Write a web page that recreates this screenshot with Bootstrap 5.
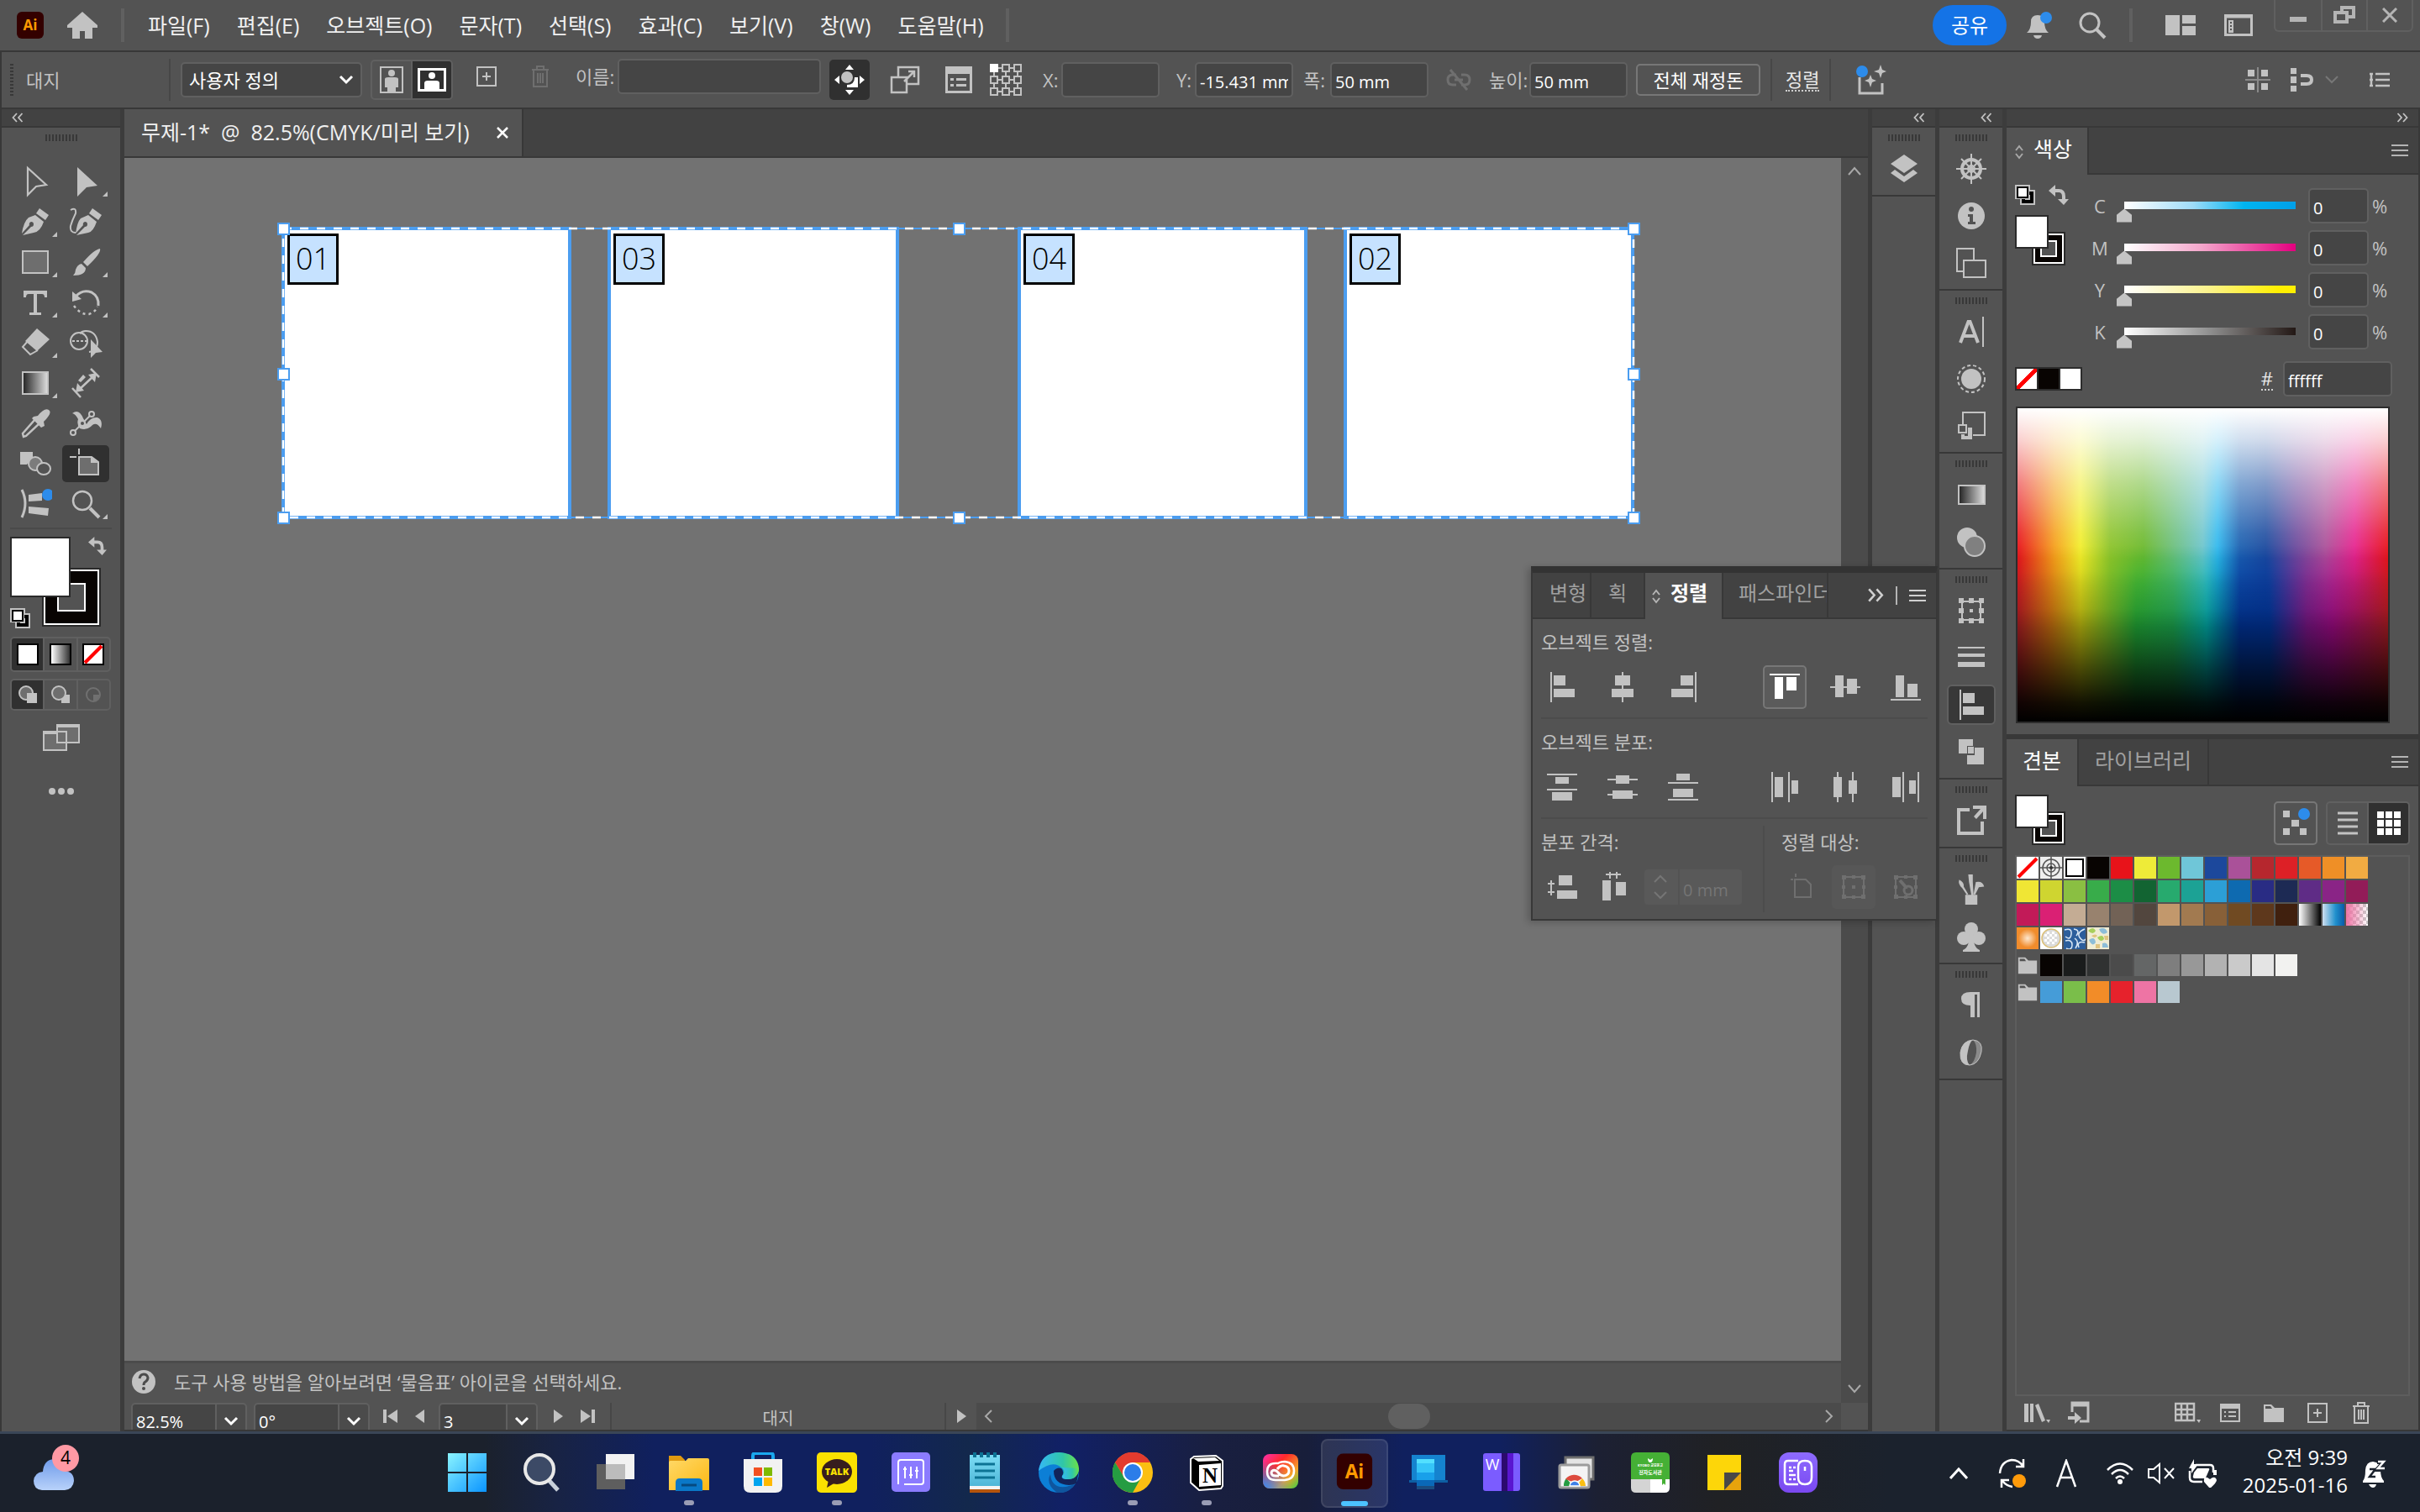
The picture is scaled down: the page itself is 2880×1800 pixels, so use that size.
<!DOCTYPE html>
<html lang="ko">
<head>
<meta charset="utf-8">
<meta name="viewport" content="width=device-width, initial-scale=1">
<title>무제-1* - Illustrator</title>
<link href="https://cdn.jsdelivr.net/npm/bootstrap@5.3.0/dist/css/bootstrap.min.css" rel="stylesheet">
<style>
:root{--pane:#535353;--deep:#424242;--edge:#383838;--field:#454545;--line:#606060;--ink:#f0f0f0;--dim:#c2c2c2}
body{font-family:"Open Sans","Noto Sans CJK KR",sans-serif;font-size:22px;line-height:30px;color:var(--ink);background:var(--edge);overflow:hidden}
svg{display:block;flex:none}
button{font:inherit;color:inherit;background:none;border:0;padding:0}
a{color:inherit;text-decoration:none}
.ic{width:36px;height:36px;color:var(--dim)}
.ic40{width:40px;height:40px;color:var(--dim)}
.ib{display:flex;align-items:center;justify-content:center;flex:none}
.w48{width:48px}.w64{width:64px}
.g10{margin-left:10px}.g12{margin-left:12px}.g20{margin-left:20px}
/* menu bar */
.menubar{height:62px;background:var(--pane);border-bottom:2px solid var(--edge);font-size:25px;line-height:28px}
.menubar .mitem{padding:0 16px;white-space:nowrap}
.vline{width:4px;height:40px;background:#606060;flex:none}
.vthin{width:2px;height:50px;background:#474747;flex:none}
.share{width:88px;height:48px;border-radius:24px;background:#1473e6;color:#fff;font-size:24px;margin-right:6px}
.wctl{align-self:flex-start;height:38px;border:2px solid #606060;border-top:0;border-radius:0 0 6px 6px}
.wctl button{width:54px;border-left:2px solid #606060}
.wctl button:first-child{border-left:0}
/* control bar */
.ctlbar{height:68px;background:var(--pane);border-bottom:2px solid var(--edge);border-left:2px solid var(--edge);color:var(--dim);white-space:nowrap}
.dotsv{width:4px;height:38px;background:repeating-linear-gradient(#383838 0 2px,transparent 2px 4px)}
.fld{background:var(--field);border:2px solid var(--line);border-radius:5px;color:#fff;font-size:20px;padding:4px 4px 0;height:42px;outline:0;min-width:0}
.fld.wide{width:242px}.fld.num{width:117px}
.sel{appearance:none;background:var(--field) url("data:image/svg+xml,%3Csvg xmlns='http://www.w3.org/2000/svg' viewBox='0 0 18 12'%3E%3Cpath d='M2 2l7 7 7-7' fill='none' stroke='%23fff' stroke-width='3'/%3E%3C/svg%3E") no-repeat right 8px center/18px 12px;border:2px solid var(--line);border-radius:5px;color:#fff;height:42px;outline:0}
.seg{height:48px;border:2px solid var(--line);border-radius:5px;overflow:hidden}
.seg>button{flex:1;align-self:stretch;border-left:2px solid var(--line)}
.seg>button:first-child{border-left:0}
.seg .on{background:#303030}
.onbtn{background:#303030;border-radius:5px;height:48px}
.obtn{border:2px solid #777;border-radius:5px;height:38px;width:148px;color:#fff}
.dotted{border-bottom:2px dotted #d0d0d0;color:#e8e8e8;line-height:26px}
.tl{width:170px;margin-left:15px}
/* workspace */
.colhead{height:22px;background:var(--deep);border-bottom:2px solid var(--edge);flex:none}
.toolbox{width:148px;background:var(--pane);border-left:2px solid var(--edge);border-right:5px solid #3c3c3c}
.grip{width:38px;height:8px;background:repeating-linear-gradient(90deg,#383838 0 2px,transparent 2px 4px)}
.tools{display:grid;grid-template-columns:60px 60px;grid-auto-rows:48px;padding:8px 10px 0;margin-top:16px}
.tools button{position:relative;margin:2px;border-radius:5px}
.tools .on{background:#303030}
.more::after{content:"";position:absolute;right:2px;bottom:4px;border:solid transparent;border-width:0 0 6px 6px;border-bottom-color:var(--dim)}
.hr1{height:2px;background:#4a4a4a;margin:4px 10px 9px}
.duo{position:relative;flex:none}
.duo i{position:absolute;display:block}
.duo .fg{left:0;top:0;background:#fff;border:2px solid #2a2a2a;z-index:1}
.duo .bk{right:0;bottom:0;border:2px solid #2a2a2a;background:#fff}
.duo .bk::before{content:"";position:absolute;inset:2px;background:#080402}
.duo .bk::after{content:"";position:absolute;background:var(--pane);border:2px solid #fff}
.fillbox{margin-left:10px}
.duo.big{width:108px;height:109px}.duo.big .fg{width:72px;height:72px}.duo.big .bk{width:70px;height:70px;bottom:2px}.duo.big .bk::after{inset:16px}
.duo.sm{width:60px;height:60px}.duo.sm .fg,.duo.sm .bk{width:40px;height:40px}.duo.sm .bk::after{inset:8px}
.docbar{height:58px;background:var(--deep);border-bottom:2px solid var(--edge)}
.doctab{background:var(--pane);padding:0 12px 0 20px;font-size:25px;border-right:2px solid var(--edge);height:56px;white-space:pre}
.doctab span{padding-bottom:2px}
.board{background:#727272;position:relative;overflow:hidden}
.ab{position:absolute;top:82px;height:348px;background:#fff;border:4px solid #4b9df0}
.ab span{position:absolute;left:3px;top:4px;width:61px;height:61px;border:3px solid #000;background:#c6e2ff;color:#000;font-size:36px;font-weight:300;line-height:54px;text-align:center}
.marq{position:absolute;left:181px;top:75px}
.hint{height:50px;background:var(--pane);border-top:3px solid #4b4b4b;color:var(--dim);padding:0 0 4px 9px;gap:22px}
.vsb{width:32px;background:#4b4b4b}
.strow{height:32px;background:var(--pane);overflow:hidden;color:var(--dim);font-size:20px}
.strow .sel{padding:4px 4px 0;background-image:url("data:image/svg+xml,%3Csvg xmlns='http://www.w3.org/2000/svg' viewBox='0 0 18 12'%3E%3Cpath d='M2 2l7 7 7-7' fill='none' stroke='%23fff' stroke-width='3'/%3E%3C/svg%3E"),linear-gradient(90deg,#606060 0 2px,#4b4b4b 2px);background-position:right 8px top 14px,right 0 top 0;background-size:18px 12px,36px 42px}
.strow .sel.w138{width:138px}.strow .sel.w118{width:118px}
.stnav{gap:20px;width:66px}
.hsb{background:#4b4b4b}
.knob{width:50px;height:30px;border-radius:15px;background:#606060}
.corner{width:32px}
.dock{width:75px;background:var(--pane);flex:none}
.dsec{border-bottom:2px solid var(--edge);padding:8px 0 3px;display:flex;flex-direction:column;align-items:center}
.dsec .grip{margin:0 auto 5px}
.dsec button{width:58px;height:48px;margin:4px 0;border-radius:6px;border:2px solid transparent}
.dsec button.on{background:#383838;border-color:#606060}
.gap5{width:5px;background:#3c3c3c;flex:none}
.side{width:490px;flex:none;margin-right:2px}
.tabsrow{height:56px;background:var(--deep);border-bottom:2px solid var(--edge);font-size:25px}
.ptab{height:54px;border-right:2px solid var(--edge);color:#a0a0a0;padding-bottom:5px;white-space:nowrap}
.ptab.on{background:var(--pane);height:56px;color:#fff;padding-bottom:7px}
.pane{background:var(--pane)}
/* colour panel */
.chan{height:50px;color:var(--dim)}
.chan label{width:30px;text-align:center}
.chan input[type=range]{appearance:none;width:222px;height:26px;margin:14px 0 0 5px;background:var(--g) no-repeat 9px 1px/calc(100% - 18px) 9px}
.chan input[type=range]::-webkit-slider-thumb{appearance:none;width:18px;height:16px;margin-top:9px;background:#c4c4c4;clip-path:polygon(50% 0,100% 45%,100% 100%,0 100%,0 45%)}
.fld.pc{width:72px;margin-left:6px}
.gc{--g:linear-gradient(90deg,#fff,#9fdcf8 40%,#00b4f0 70%,#00a0e9)}
.gm{--g:linear-gradient(90deg,#fff,#f4a6cb 45%,#e4007f)}
.gy{--g:linear-gradient(90deg,#fff,#fbf28a 50%,#ffef00 90%)}
.gk{--g:linear-gradient(90deg,#fff,#8f8f8f 50%,#231815)}
.spec{height:377px;margin:12px 34px 0 11px;border:2px solid #2c2c2c;position:relative;background:linear-gradient(90deg,#e8131a,#f5a01c 10%,#f2ee2c 17%,#8cc32a 25%,#6cb92e 34%,#6ec5cc 50%,#30b8ee 54%,#1c60b0 60%,#1c4a9e 67%,#6a4a9c 75%,#aa5199 83%,#e6258f 91%,#e8131a)}
.spec::before,.spec::after{content:"";position:absolute;inset:0}
.spec::before{background:linear-gradient(90deg,#b01e24,#c87010 9%,#c4c010 17%,#22ac38 32%,#1caa50 42%,#00ada9 51%,#00349a 60%,#00349a 68%,#7a1688 78%,#a00a86 85%,#b01e24);-webkit-mask:linear-gradient(transparent 44%,rgba(0,0,0,.6) 56%,#000 70%)}
.spec::after{background:linear-gradient(#fff,rgba(255,255,255,.8) 10%,rgba(255,255,255,.45) 24%,rgba(255,255,255,.12) 40%,rgba(255,255,255,0) 48%,rgba(0,0,0,0) 52%,rgba(0,0,0,.12) 64%,rgba(0,0,0,.35) 73%,rgba(0,0,0,.62) 83%,rgba(0,0,0,.9) 94%,#000)}
.tri{border:2px solid #2c2c2c;width:80px;height:28px;gap:2px;background:#2c2c2c}
.tri i{flex:1}
.nonew{background:linear-gradient(to bottom right,#fff 43%,#f00 43% 57%,#fff 57%)}
.fld.hex{width:130px}
/* swatches */
.swlist{border:2px solid #5d5d5d;position:relative;margin:12px 10px 0}
.swrow{gap:2px;height:26px;margin-bottom:2px;color:var(--dim)}
.swrow.grp{margin:6px 0}
.swrow button{width:26px;height:26px;flex:none;display:block}
.sqb{width:52px;height:52px;border:2px solid #777;border-radius:5px}
.s52{width:100px;height:52px}
.botic{height:40px;padding:0 14px 0 20px;color:var(--dim)}
/* align panel */
.alpan{position:absolute;right:574px;top:544px;width:484px;border:2px solid var(--edge);border-top:8px solid #333;background:var(--pane);box-shadow:-4px 2px 8px rgba(0,0,0,.2)}
.alpan .tabsrow{height:55px;font-size:24px}
.alpan .ptab{height:53px}.alpan .ptab.on{height:55px;font-weight:700}
.alpan .lab{color:var(--dim);margin:12px 10px 0;height:30px}
.airow{padding:0 10px 0 9px;height:52px;margin-top:13px}
.airow button{width:52px;height:52px;margin-right:20px;border:2px solid transparent;border-radius:5px}
.airow button:last-child{margin-right:0}
.airow .tight{margin-right:10px}
.airow .hot{border-color:#777;background:#5b5b5b}
.airow .hot svg{color:#fff}
.airow .off{background:#575757}
.airow .off svg,.dimm{color:#6f6f6f}
.hr2{height:2px;background:#4c4c4c;margin:10px 10px 0}
.spin{width:116px;height:42px;background:#595959;border-radius:4px;color:#757575}
.spin input{width:76px;background:none;border:0;border-left:2px solid #535353;height:42px;padding:6px 0 0 4px;color:#757575;font-size:20px}
/* taskbar */
.tb{height:96px;border-top:3px solid #3a4657;background:linear-gradient(90deg,#1b212c 0 20%,#182344 23%,#10205e 27% 36%,#13284c 40%,#112066 44%,#191f40 50%,#181e3a 54%,#10205e 58% 62%,#1c2033 66%,#202124 71%,#1b222d 78%);color:#fff}
.wth{width:512px;padding-left:38px}
.app{width:88px;height:93px;padding-bottom:2px;position:relative}
.app.act{background:rgba(255,255,255,.1);border:2px solid rgba(255,255,255,.09);border-radius:8px;width:80px;height:82px;margin:0 4px}
.app.run::after{content:"";position:absolute;bottom:8px;width:12px;height:6px;border-radius:3px;background:#9a9db5}
.app.act::after{bottom:0;width:32px;background:#4cc2ff}
.app svg{width:48px;height:48px}
.clock{font-size:24px;line-height:33px;text-align:right;white-space:nowrap;padding-bottom:5px}
.cnt{position:absolute;left:24px;top:-12px;width:32px;height:32px;border-radius:50%;background:#ff99a4;color:#000;font-size:21px;line-height:31px;text-align:center}
</style>
</head>
<body class="vh-100 d-flex flex-column">
<svg width="0" height="0" class="position-absolute" aria-hidden="true">
<defs>
<linearGradient id="gbw"><stop stop-color="#222"/><stop offset="1" stop-color="#e0e0e0"/></linearGradient>
<linearGradient id="gwb"><stop stop-color="#fff"/><stop offset="1" stop-color="#333"/></linearGradient>
<linearGradient id="gwin" x2="1" y2="1"><stop stop-color="#8af4ff"/><stop offset="1" stop-color="#0a94ff"/></linearGradient>
<linearGradient id="gfold" x2="1" y2="1"><stop stop-color="#ffd968"/><stop offset="1" stop-color="#fdb813"/></linearGradient>
<linearGradient id="gedge" x2="1"><stop stop-color="#35b8f5"/><stop offset=".6" stop-color="#30c6a8"/><stop offset="1" stop-color="#6ae04a"/></linearGradient>
<linearGradient id="gnote" x2="0" y2="1"><stop stop-color="#7cdcf4"/><stop offset="1" stop-color="#4fb7d8"/></linearGradient>
<linearGradient id="gcc" x2="1" y2="1"><stop stop-color="#ff2fb0"/><stop offset=".35" stop-color="#ff2a2a"/><stop offset=".7" stop-color="#f5a42a"/><stop offset="1" stop-color="#38d048"/></linearGradient>
<radialGradient id="gcc2" cx="0" cy="1" r=".8"><stop stop-color="#2c8cff"/><stop offset="1" stop-color="#2c8cff" stop-opacity="0"/></radialGradient>
<linearGradient id="gpur" x2="0" y2="1"><stop stop-color="#8d6bff"/><stop offset="1" stop-color="#7a48f0"/></linearGradient>
<linearGradient id="gcld" x2="0" y2="1"><stop stop-color="#6f9bea"/><stop offset="1" stop-color="#b8d2fa"/></linearGradient>
</defs>
<symbol id="dchl" viewBox="0 0 14 12"><path d="M6 1L1.500 6 6 11M12.500 1L8 6l4.500 5" fill="none" stroke="currentColor" stroke-width="1.800"/></symbol>
<symbol id="dchr" viewBox="0 0 14 12"><path d="M1.500 1L6 6l-4.500 5M8 1l4.500 5L8 11" fill="none" stroke="currentColor" stroke-width="1.800"/></symbol>
<symbol id="ham" viewBox="0 0 20 14"><path d="M0 1h20M0 7h20M0 13h20" stroke="currentColor" stroke-width="2"/></symbol>
<symbol id="updn" viewBox="0 0 10 18"><path d="M1 7l4-5 4 5M1 11l4 5 4-5" fill="none" stroke="currentColor" stroke-width="2"/></symbol>
<symbol id="swap" viewBox="0 0 24 24"><path d="M7 7h5q6 0 6 7v4" fill="none" stroke="currentColor" stroke-width="4"/><path d="M0 7l8-7v14zM11 17h13l-6 7z" fill="currentColor"/></symbol>
<symbol id="dflt" viewBox="0 0 24 24"><path d="M0 0h18v6h6v18H6v-7H0z" fill="#c2c2c2"/><path d="M2 2h14v14H2z" fill="#000"/><path d="M4 4h10v10H4z" fill="#fff"/><path d="M17 8h5v14H8v-5h4v1h6v-6h-1z" fill="#000"/></symbol>
<symbol id="a-l" viewBox="0 0 36 36"><path d="M4 0h2v36H4zM8 4h14v12H8zM8 20h25v10H8z" fill="currentColor"/></symbol>
<symbol id="a-c" viewBox="0 0 36 36"><path d="M17 0h2v36h-2zM9 4h18v12H9zM5 20h26v10H5z" fill="currentColor"/></symbol>
<symbol id="a-r" viewBox="0 0 36 36"><path d="M32 0h2v36h-2zM15 4h15v12H15zM4 20h26v10H4z" fill="currentColor"/></symbol>
<symbol id="a-t" viewBox="0 0 36 36"><path d="M0 2h36v2H0zM6 6h10v26H6zM20 6h12v16H20z" fill="currentColor"/></symbol>
<symbol id="a-m" viewBox="0 0 36 36"><path d="M0 17h36v2H0zM6 4h10v26H6zM20 8h12v18H20z" fill="currentColor"/></symbol>
<symbol id="a-b" viewBox="0 0 36 36"><path d="M0 32h36v2H0zM6 4h10v26H6zM20 14h12v16H20z" fill="currentColor"/></symbol>
<symbol id="d-t" viewBox="0 0 36 36"><path d="M0 2h36v2H0zM10 6h16v8H10zM0 20h36v2H0zM6 24h24v10H6z" fill="currentColor"/></symbol>
<symbol id="d-m" viewBox="0 0 36 36"><path d="M0 8h36v2H0zM10 4h16v10H10zM0 26h36v2H0zM6 22h24v10H6z" fill="currentColor"/></symbol>
<symbol id="d-b" viewBox="0 0 36 36"><path d="M10 2h16v8H10zM0 12h36v2H0zM6 20h24v10H6zM0 32h36v2H0z" fill="currentColor"/></symbol>
<symbol id="d-l" viewBox="0 0 36 36"><path d="M2 0h2v36H2zM6 6h10v24H6zM22 0h2v36h-2zM26 10h8v16h-8z" fill="currentColor"/></symbol>
<symbol id="d-c" viewBox="0 0 36 36"><path d="M8 0h2v36H8zM4 6h10v24H4zM26 0h2v36h-2zM22 10h10v16H22z" fill="currentColor"/></symbol>
<symbol id="d-r" viewBox="0 0 36 36"><path d="M2 6h10v24H2zM14 0h2v36h-2zM22 10h8v16h-8zM32 0h2v36h-2z" fill="currentColor"/></symbol>
<symbol id="sp-v" viewBox="0 0 36 36"><path d="M14 4h16v12H14zM12 22h24v10H12zM4 10h2v18H4zM1 13h8v2H1zM1 23h8v2H1z" fill="currentColor"/></symbol>
<symbol id="sp-h" viewBox="0 0 36 36"><path d="M4 10h10v24H4zM20 12h12v16H20zM8 2h18v2H8zM12 0h2v8h-2zM20 0h2v8h-2z" fill="currentColor"/></symbol>
<symbol id="bbox" viewBox="0 0 36 36"><path d="M7 7h22v22H7z" fill="none" stroke="currentColor" stroke-width="2"/><path d="M3 3h6v6H3zM15 3h6v6h-6zM27 3h6v6h-6zM3 15h6v6H3zM27 15h6v6h-6zM3 27h6v6H3zM15 27h6v6h-6zM27 27h6v6h-6zM16 16h4v4h-4z" fill="currentColor"/></symbol>
<symbol id="bbox2" viewBox="0 0 36 36"><path d="M6 6h24v24H6z" fill="none" stroke="currentColor" stroke-width="2"/><path d="M4 4h5v5H4zM16 4h4v4h-4zM27 4h5v5h-5zM4 16h4v4H4zM28 16h4v4h-4zM4 27h5v5H4zM16 28h4v4h-4zM27 27h5v5h-5zM16 16h4v4h-4z" fill="currentColor"/></symbol>
<symbol id="s-trash" viewBox="0 0 28 28"><path d="M4 6h20M10 6V2h8v4M6 6v20h16V6M11 10v12M14 10v12M17 10v12" fill="none" stroke="currentColor" stroke-width="2"/></symbol>
<symbol id="s-plus" viewBox="0 0 28 28"><path d="M3 3h22v22H3zM14 9v10M9 14h10" fill="none" stroke="currentColor" stroke-width="2"/></symbol>
<symbol id="s-fold" viewBox="0 0 28 28"><path d="M2 4h9l4 4h11v17H2z" fill="currentColor"/><path d="M4 9V6h6l2 3z" fill="#535353"/></symbol>
<symbol id="ailogo" viewBox="0 0 32 32"><rect width="32" height="32" rx="6" fill="#330000"/><text x="16" y="22" text-anchor="middle" font-family="Open Sans" font-weight="700" font-size="17" fill="#ff9a00">Ai</text></symbol>
</svg>

<header class="menubar d-flex align-items-center flex-shrink-0">
  <svg width="32" height="32" class="g20"><use href="#ailogo"/></svg>
  <a href="#" class="ms-4" aria-label="홈"><svg width="44" height="34" viewBox="0 0 44 34"><path d="M22 1L4 17v3h6v13h9v-9h6v9h9V20h6v-3z" fill="#c2c2c2"/></svg></a>
  <span class="vline ms-4"></span>
  <nav class="d-flex g12">
    <a class="mitem" href="#">파일(F)</a><a class="mitem" href="#">편집(E)</a><a class="mitem" href="#">오브젝트(O)</a><a class="mitem" href="#">문자(T)</a><a class="mitem" href="#">선택(S)</a><a class="mitem" href="#">효과(C)</a><a class="mitem" href="#">보기(V)</a><a class="mitem" href="#">창(W)</a><a class="mitem" href="#">도움말(H)</a>
  </nav>
  <span class="vline g10"></span>
  <div class="ms-auto d-flex align-items-center align-self-stretch">
    <button class="share">공유</button>
    <button class="ib w64" aria-label="알림"><svg width="36" height="36" viewBox="0 0 36 36"><path d="M4 27q5-4 5-13 0-8 8-8t8 8q0 9 5 13z" fill="#c2c2c2"/><path d="M12 30h10q-1 4-5 4t-5-4z" fill="#c2c2c2"/><circle cx="27" cy="9" r="7" fill="#2d8ceb"/></svg></button>
    <button class="ib w64" aria-label="검색"><svg width="36" height="36" viewBox="0 0 36 36"><circle cx="15" cy="15" r="11" fill="none" stroke="#c2c2c2" stroke-width="3"/><path d="M23 23l10 10" stroke="#c2c2c2" stroke-width="4"/></svg></button>
    <span class="vline g12"></span>
    <button class="ib g20" style="width:74px" aria-label="작업 영역"><svg width="36" height="24" viewBox="0 0 36 24"><path d="M0 0h17v24H0zM20 0h16v10H20zM20 13h16v11H20z" fill="#c2c2c2"/></svg></button>
    <button class="ib w64" aria-label="화면"><svg width="34" height="26" viewBox="0 0 34 26"><path d="M1.500 1.500h31v23h-31zM1 3h32" fill="none" stroke="#c2c2c2" stroke-width="3"/><path d="M5 7h6v15H5z" fill="#c2c2c2"/><path d="M7 9h2v2H7zM7 13h2v2H7zM7 17h2v2H7z" fill="#535353"/></svg></button>
    <div class="wctl d-flex g10 me-2">
      <button class="ib" aria-label="최소화"><svg width="20" height="22"><path d="M0 13h20v6H0z" fill="#b4b4b4"/></svg></button>
      <button class="ib" aria-label="복원"><svg width="26" height="22" viewBox="0 0 26 22"><path d="M10 6V2h14v11h-6M2 8h14v11H2z" fill="none" stroke="#b4b4b4" stroke-width="4"/></svg></button>
      <button class="ib" aria-label="닫기"><svg width="18" height="18"><path d="M1 1l16 16M17 1L1 17" stroke="#b4b4b4" stroke-width="3"/></svg></button>
    </div>
  </div>
</header>

<section class="ctlbar d-flex align-items-center flex-shrink-0">
  <span class="dotsv g10"></span>
  <span class="tl">대지</span>
  <span class="vthin"></span>
  <select class="sel g12 ps-2" style="width:216px" aria-label="사전 설정"><option>사용자 정의</option></select>
  <div class="seg d-flex g10" style="width:98px">
    <button class="ib" aria-label="세로"><svg width="28" height="32" viewBox="0 0 28 32"><path d="M1 1h26v30H1z" fill="none" stroke="#c2c2c2" stroke-width="2"/><circle cx="14" cy="8" r="4" fill="#c2c2c2"/><path d="M6 15q0-2 4-2h8q4 0 4 2v10h-3v6H9v-6H6z" fill="#c2c2c2"/></svg></button>
    <button class="ib on" aria-label="가로"><svg width="34" height="28" viewBox="0 0 34 28"><path d="M1.500 1.500h31v25h-31z" fill="none" stroke="#fff" stroke-width="3"/><circle cx="17" cy="9" r="4" fill="#fff"/><path d="M8 26V18q0-3 4-3h10q4 0 4 3v8z" fill="#fff"/></svg></button>
  </div>
  <button class="ib w64 ms-2" aria-label="새 대지"><svg width="28" height="28" class="mb-2"><use href="#s-plus"/></svg></button>
  <button class="ib w64 dimm" aria-label="삭제"><svg width="28" height="28" class="mb-2"><use href="#s-trash"/></svg></button>
  <label class="g10 mb-2" style="width:50px" for="nm">이름:</label><input id="nm" class="fld wide mb-2">
  <button class="ib onbtn w48 g10" aria-label="대지와 함께 이동"><svg width="36" height="36" viewBox="0 0 36 36"><path d="M18 0l5 6H13zM18 36l5-6H13zM0 18l6-5v10zM36 18l-6-5v10z" fill="#fff"/><circle cx="15" cy="15" r="7" fill="#c2c2c2"/><path d="M24 15h4v12H15v-3q9 0 9-9z" fill="#fff"/></svg></button>
  <button class="ib w64 g10" aria-label="크기"><svg class="ic" viewBox="0 0 36 36"><path d="M10 15V3h24v20H20M2 15h18v18H2zM17 20L29 8M22 8h7v7" fill="none" stroke="currentColor" stroke-width="2.500"/></svg></button>
  <button class="ib w64" aria-label="옵션"><svg width="32" height="32" viewBox="0 0 32 32"><path d="M1.500 1.500h29v29h-29z" fill="none" stroke="#c2c2c2" stroke-width="3"/><path d="M1 1h30v8H1zM6 14h4v3H6zM13 14h12v3H13zM6 21h4v3H6zM13 21h12v3H13z" fill="#c2c2c2"/></svg></button>
  <button class="ib w48" aria-label="기준점"><svg width="38" height="38" viewBox="0 0 38 38"><path d="M5 5h28v28H5zM5 19h28M19 5v28" fill="none" stroke="#c2c2c2" stroke-width="2"/><path d="M15 1h8v8h-8zM29 1h8v8h-8zM1 15h8v8H1zM15 15h8v8h-8zM29 15h8v8h-8zM1 29h8v8H1zM15 29h8v8h-8zM29 29h8v8h-8z" fill="#535353" stroke="#c2c2c2" stroke-width="2"/><path d="M0 0h10v10H0z" fill="#fff"/></svg></button>
  <label class="g20" style="width:22px" for="fx">X:</label><input id="fx" class="fld num">
  <label class="g20" style="width:22px" for="fy">Y:</label><input id="fy" class="fld num" value="-15.431 mm">
  <label class="g12" style="width:32px" for="fw">폭:</label><input id="fw" class="fld num" value="50 mm">
  <button class="ib g12 dimm w48" aria-label="비율 유지"><svg width="30" height="30" viewBox="0 0 30 30"><path d="M12 9H8q-6 0-6 6t6 6h4M18 9h4q6 0 6 6t-6 6h-4M10 15h10M5 3l20 24" fill="none" stroke="currentColor" stroke-width="3"/></svg></button>
  <label class="g12" style="width:48px" for="fh">높이:</label><input id="fh" class="fld num" value="50 mm">
  <button class="obtn g10">전체 재정돈</button>
  <span class="vthin g12"></span>
  <a class="dotted ms-3" href="#">정렬</a>
  <span class="vthin g12"></span>
  <button class="ib g20" style="width:56px" aria-label="생성"><svg width="40" height="40" viewBox="0 0 40 40"><path d="M6 17v19h27V24" fill="none" stroke="#c2c2c2" stroke-width="3"/><path d="M31 2l2 6 5 2-5 2-2 6-2-6-6-2 6-2zM19 14l2 5 5 2-5 2-2 6-2-6-5-2 5-2z" fill="#c2c2c2"/><circle cx="9" cy="10" r="7" fill="#2d8ceb"/></svg></button>
  <div class="ms-auto d-flex align-items-center" style="padding-right:36px">
    <svg width="30" height="30" viewBox="0 0 30 30"><path d="M3 3h8v8H3zM19 3h8v8h-8zM3 19h8v8H3zM19 19h8v8h-8z" fill="#c2c2c2"/><path d="M15 0v30M0 15h30" stroke="#8a8a8a" stroke-width="2"/></svg>
    <svg width="28" height="30" viewBox="0 0 28 30" class="ms-4"><path d="M0 1h7v7H0zM0 11h7v8H0zM0 22h7v7H0z" fill="#c2c2c2"/><path d="M12 10h7q6 0 6 5t-6 5h-7" fill="none" stroke="#c2c2c2" stroke-width="4"/></svg>
    <svg width="18" height="12" viewBox="0 0 18 12" class="g12"><path d="M2 2l7 7 7-7" fill="none" stroke="#777" stroke-width="2"/></svg>
    <svg width="24" height="18" viewBox="0 0 24 18" style="margin-left:36px"><path d="M0 2h4M7 2h17M0 9h4M7 9h17M0 16h4M7 16h17M2 1v16" stroke="#c2c2c2" stroke-width="2.500"/></svg>
  </div>
</section>

<main class="d-flex flex-grow-1 position-relative" style="min-height:0">
  <aside class="toolbox d-flex flex-column flex-shrink-0">
    <div class="colhead d-flex align-items-center ps-2"><svg width="14" height="12" class="ms-1" color="#c2c2c2"><use href="#dchl"/></svg></div>
    <div class="grip mx-auto mt-2"></div>
    <div class="tools">
      <button class="ib" aria-label="선택"><svg class="ic40" viewBox="0 0 40 40"><path d="M11 4v32l10-10 12-2z" fill="none" stroke="currentColor" stroke-width="2.200"/></svg></button>
      <button class="ib more" aria-label="직접 선택"><svg class="ic40" viewBox="0 0 40 40"><path d="M10 3v35l11-11 13-2z" fill="currentColor"/></svg></button>
      <button class="ib more" aria-label="펜"><svg class="ic40" viewBox="0 0 40 40"><path d="M25 4l11 8-4 6-11-8zM20 12l10 8q-4 12-12 13L5 36l10-10q3 0 3-3t-3-3q-3 1-2 4L4 34q2-14 8-19z" fill="currentColor"/></svg></button>
      <button class="ib" aria-label="곡률"><svg class="ic40" viewBox="0 0 40 40"><path d="M28 4l11 8-4 6-11-8zM23 12l10 8q-4 12-10 13L9 36l10-10q3 0 3-3t-3-3q-3 1-2 4L8 34q2-14 6-18z" fill="currentColor"/><path d="M2 6q7-4 6 4-4 8-6 15-1 8 6 8" fill="none" stroke="currentColor" stroke-width="2"/></svg></button>
      <button class="ib more" aria-label="사각형"><svg class="ic40" viewBox="0 0 40 40"><path d="M5 7h30v26H5z" fill="#6e6e6e" stroke="currentColor" stroke-width="2"/></svg></button>
      <button class="ib more" aria-label="브러시"><svg class="ic40" viewBox="0 0 40 40"><path d="M37 4q2 5-15 21l-5-5Q30 5 37 4zM15 22l5 5q0 9-15 9 3-3 3-7 2-6 7-7z" fill="currentColor"/></svg></button>
      <button class="ib more" aria-label="문자"><svg class="ic40" viewBox="0 0 40 40"><path d="M6 6h28v8h-3q0-4-3-4h-6v22h5v3H13v-3h5V10h-6q-3 0-3 4H6z" fill="currentColor"/></svg></button>
      <button class="ib more" aria-label="회전"><svg class="ic40" viewBox="0 0 40 40"><path d="M8 13q8-9 19-5 9 5 8 16" fill="none" stroke="currentColor" stroke-width="3"/><path d="M4 7v12l11-3z" fill="currentColor"/><path d="M6 24q8 11 18 10 8-3 10-9" fill="none" stroke="currentColor" stroke-width="2.500" stroke-dasharray="3 4"/></svg></button>
      <button class="ib more" aria-label="지우개"><svg class="ic40" viewBox="0 0 40 40"><path d="M22 3l15 13-15 14L8 18z" fill="currentColor"/><path d="M12 17L5 25l9 9 9-5" fill="none" stroke="currentColor" stroke-width="2"/></svg></button>
      <button class="ib" aria-label="도형 구성"><svg class="ic40" viewBox="0 0 40 40"><path d="M24 31q10-1 10-12Q32 6 20 6q-4 0-7 3" fill="none" stroke="currentColor" stroke-width="2"/><circle cx="12" cy="18" r="10" fill="none" stroke="currentColor" stroke-width="2"/><path d="M4 18h20" stroke="currentColor" stroke-width="2" stroke-dasharray="3 2"/><path d="M26 16v22l6-6 8-1z" fill="currentColor"/></svg></button>
      <button class="ib more" aria-label="그레이디언트"><svg class="ic40" viewBox="0 0 40 40"><path d="M5 7h30v26H5z" fill="url(#gbw)" stroke="currentColor" stroke-width="2"/></svg></button>
      <button class="ib" aria-label="치수"><svg class="ic40" viewBox="0 0 40 40"><path d="M4 26l10 11M26 3l10 10M12 28L29 12" stroke="currentColor" stroke-width="2.500"/><path d="M8 31l2-11 8 9zM33 8l-2 11-8-9zM11 17l6-7 3 3-6 6z" fill="currentColor"/></svg></button>
      <button class="ib" aria-label="스포이드"><svg class="ic40" viewBox="0 0 40 40"><path d="M6 36l-1-4 15-17 5 5L9 35z" fill="none" stroke="currentColor" stroke-width="2.500"/><path d="M18 12l5-1q8-10 13-7t-6 14l1 5-4 2-11-11z" fill="currentColor"/></svg></button>
      <button class="ib" aria-label="퍼펫 뒤틀기"><svg class="ic40" viewBox="0 0 40 40"><path d="M4 8q8-6 13 6l4 7q5-9 13-8 7 3 4 13-5-8-10-4-6 7-15 4Q9 21 11 15 8 9 4 8z" fill="currentColor"/><path d="M5 31L28 8" stroke="currentColor" stroke-width="2"/><circle cx="5" cy="31" r="3" fill="#535353" stroke="currentColor" stroke-width="2"/><circle cx="27" cy="9" r="3" fill="#535353" stroke="currentColor" stroke-width="2"/><circle cx="16" cy="20" r="3" fill="#535353" stroke="currentColor" stroke-width="2"/></svg></button>
      <button class="ib" aria-label="블렌드"><svg class="ic40" viewBox="0 0 40 40"><path d="M2 6h15v6l-7 9H2z" fill="currentColor"/><circle cx="20" cy="20" r="8" fill="#7c7c7c" stroke="currentColor" stroke-width="2"/><ellipse cx="30" cy="26" rx="8" ry="7" fill="#535353" stroke="currentColor" stroke-width="2"/></svg></button>
      <button class="ib on" aria-label="대지"><svg class="ic40" viewBox="0 0 40 40"><path d="M1 12h8M12 2v7" stroke="currentColor" stroke-width="2"/><path d="M12 12h15l8 6v15H12z" fill="#6e6e6e" stroke="currentColor" stroke-width="2"/><path d="M26 12v7h9z" fill="currentColor"/></svg></button>
      <button class="ib" aria-label="원근 격자"><svg class="ic40" viewBox="0 0 40 40"><path d="M4 3q8 16 0 33" fill="none" stroke="currentColor" stroke-width="3"/><path d="M12 9l16-2v9l-16 1zM12 23l24 2-1 9-23-3z" fill="currentColor"/><circle cx="35" cy="9" r="7" fill="#2d8ceb"/></svg></button>
      <button class="ib more" aria-label="돋보기"><svg class="ic40" viewBox="0 0 40 40"><circle cx="16" cy="16" r="11" fill="none" stroke="currentColor" stroke-width="2.500"/><path d="M25 25l11 11" stroke="currentColor" stroke-width="4"/></svg></button>
    </div>
    <div class="hr1"></div>
    <div class="position-relative fillbox">
      <div class="duo big"><i class="fg"></i><i class="bk"></i></div>
      <svg width="22" height="22" class="position-absolute end-0 top-0 me-3" color="#c2c2c2"><use href="#swap"/></svg>
      <svg width="24" height="24" class="position-absolute start-0 bottom-0"><use href="#dflt"/></svg>
    </div>
    <div class="seg d-flex" style="height:42px;margin:10px 11px 0 10px">
      <button class="ib on" aria-label="칠"><svg width="26" height="26"><path d="M0 0h26v26H0z"/><path d="M2 2h22v22H2z" fill="#fff"/></svg></button>
      <button class="ib" aria-label="그레이디언트 칠"><svg width="26" height="26"><path d="M0 0h26v26H0z"/><path d="M2 2h22v22H2z" fill="url(#gwb)"/></svg></button>
      <button class="ib" aria-label="없음"><svg width="26" height="26"><path d="M0 0h26v26H0z"/><path d="M2 2h22v22H2z" fill="#fff"/><path d="M3 23L23 3" stroke="#f00" stroke-width="4"/></svg></button>
    </div>
    <div class="seg d-flex" style="height:38px;margin:8px 11px 0 10px">
      <button class="ib on" aria-label="표준 그리기"><svg width="22" height="22"><circle cx="9" cy="9" r="8" fill="#6e6e6e" stroke="#c2c2c2" stroke-width="2"/><path d="M10 9h12v12H10z" fill="#c2c2c2"/></svg></button>
      <button class="ib" aria-label="배경 그리기"><svg width="22" height="22"><path d="M12 11h10v10H12z" fill="#c2c2c2"/><circle cx="9" cy="9" r="8" fill="#6e6e6e" stroke="#c2c2c2" stroke-width="2"/></svg></button>
      <button class="ib" aria-label="내부 그리기"><svg width="20" height="20"><circle cx="10" cy="10" r="8" fill="none" stroke="#707070" stroke-width="2"/><path d="M10 10h8q-1 7-8 8z" fill="#707070"/></svg></button>
    </div>
    <button class="mx-auto mt-3" aria-label="화면 모드"><svg width="44" height="32"><path d="M1 9h27v22H1zM17 1h26v21H17z" fill="#6e6e6e" stroke="#c2c2c2" stroke-width="2"/><path d="M0 8h16v4H0zM16 0h28v4H16z" fill="#c2c2c2"/></svg></button>
    <button class="mx-auto" style="margin-top:44px" aria-label="더 보기"><svg width="30" height="8"><circle cx="4" cy="4" r="4" fill="#c2c2c2"/><circle cx="15" cy="4" r="4" fill="#c2c2c2"/><circle cx="26" cy="4" r="4" fill="#c2c2c2"/></svg></button>
  </aside>

  <section class="d-flex flex-column flex-grow-1" style="min-width:0">
    <div class="docbar flex-shrink-0 d-flex">
      <div class="doctab d-flex align-items-center"><span>무제-1*&nbsp; @&nbsp; 82.5%(CMYK/미리 보기)</span><button class="ib ms-4 ps-2 me-1" aria-label="닫기"><svg width="14" height="14"><path d="M1 1l12 12M13 1L1 13" stroke="#fff" stroke-width="2.500"/></svg></button></div>
    </div>
    <div class="d-flex flex-grow-1" style="min-height:0">
      <div class="d-flex flex-column flex-grow-1" style="min-width:0">
        <div class="board flex-grow-1">
          <div class="ab" style="left:187px;width:345px"><span>01</span></div>
          <div class="ab" style="left:575px;width:347px"><span>03</span></div>
          <div class="ab" style="left:1063px;width:345px"><span>04</span></div>
          <div class="ab" style="left:1451px;width:346px"><span>02</span></div>
          <svg class="marq" width="1630" height="362">
            <path d="M8 9h1607v344H8z" fill="none" stroke="#4b9df0" stroke-width="2"/>
            <path d="M8 9h1607v344H8z" fill="none" stroke="#fff" stroke-width="2.500" stroke-dasharray="10 10"/>
            <g fill="#fff" stroke="#4b9df0" stroke-width="2"><path d="M2 3h13v13H2zM806 3h13v13h-13zM1609 3h13v13h-13zM2 176h13v13H2zM1609 176h13v13h-13zM2 347h13v13H2zM806 347h13v13h-13zM1609 347h13v13h-13z"/></g>
          </svg>
        </div>
        <div class="hint d-flex align-items-center flex-shrink-0">
          <svg width="28" height="28" viewBox="0 0 28 28"><circle cx="14" cy="14" r="14" fill="#c2c2c2"/><path d="M9 10q1-5 5-5t5 4q0 3-3 5-2 1-2 4" fill="none" stroke="#4b4b4b" stroke-width="3"/><circle cx="14" cy="22" r="2" fill="#4b4b4b"/></svg>
          <span>도구 사용 방법을 알아보려면 ‘물음표’ 아이콘을 선택하세요.</span>
        </div>
      </div>
      <div class="vsb d-flex flex-column align-items-center justify-content-between py-2 flex-shrink-0">
        <svg width="16" height="16"><path d="M1 12l7-8 7 8" fill="none" stroke="#a8a8a8" stroke-width="2"/></svg>
        <svg width="16" height="16"><path d="M1 3l7 8 7-8" fill="none" stroke="#a8a8a8" stroke-width="2"/></svg>
      </div>
    </div>
    <div class="strow d-flex align-items-start flex-shrink-0 ps-2">
      <select class="sel w138" aria-label="확대"><option>82.5%</option></select>
      <select class="sel w138 ms-2" aria-label="회전"><option>0°</option></select>
      <div class="stnav d-flex align-items-center h-100 ms-3">
        <svg width="18" height="16"><path d="M0 0h4v16H0zM17 0v16L5 8z" fill="#c2c2c2"/></svg>
        <svg width="12" height="16"><path d="M11 0v16L0 8z" fill="#c2c2c2"/></svg>
      </div>
      <select class="sel w118" aria-label="대지 번호"><option>3</option></select>
      <div class="d-flex align-items-center h-100" style="gap:20px;padding:0 18px">
        <svg width="12" height="16"><path d="M1 0v16l11-8z" fill="#c2c2c2"/></svg>
        <svg width="18" height="16"><path d="M14 0h4v16h-4zM1 0v16l12-8z" fill="#c2c2c2"/></svg>
      </div>
      <div class="text-center pt-1" style="width:400px;border:solid #474747;border-width:0 2px;height:32px">대지</div>
      <div class="ib h-100" style="width:36px"><svg width="12" height="16"><path d="M1 0v16l11-8z" fill="#c2c2c2"/></svg></div>
      <div class="hsb flex-grow-1 h-100 d-flex align-items-center justify-content-between px-2">
        <svg width="12" height="16"><path d="M10 1L3 8l7 7" fill="none" stroke="#a8a8a8" stroke-width="2"/></svg>
        <span class="knob"></span>
        <svg width="12" height="16"><path d="M2 1l7 7-7 7" fill="none" stroke="#a8a8a8" stroke-width="2"/></svg>
      </div>
      <div class="corner"></div>
    </div>
    <div style="height:2px"></div>
  </section>

  <div class="gap5"></div>
  <aside class="dock">
    <div class="colhead d-flex align-items-center justify-content-end pe-2"><svg width="14" height="12" class="me-1" color="#c2c2c2"><use href="#dchl"/></svg></div>
    <div class="dsec"><div class="grip"></div>
      <button class="ib" aria-label="레이어"><svg width="36" height="36" viewBox="0 0 36 36"><path d="M18 1l16 11-16 11L2 12zM7 19l11 8 11-8 5 4-16 11L2 23z" fill="#c2c2c2"/></svg></button></div>
  </aside>
  <div class="gap5"></div>
  <aside class="dock">
    <div class="colhead d-flex align-items-center justify-content-end pe-2"><svg width="14" height="12" class="me-1" color="#c2c2c2"><use href="#dchl"/></svg></div>
    <div class="dsec"><div class="grip"></div>
      <button class="ib" aria-label="색상 안내"><svg class="ic" viewBox="0 0 36 36"><g fill="none" stroke="currentColor"><circle cx="18" cy="18" r="11" stroke-width="4"/><circle cx="18" cy="18" r="4" stroke-width="2"/><path d="M18 0v36M0 18h36M6 6l24 24M30 6L6 30" stroke-width="2"/></g></svg></button>
      <button class="ib" aria-label="정보"><svg class="ic" viewBox="0 0 36 36"><circle cx="18" cy="18" r="16" fill="currentColor"/><circle cx="18" cy="10" r="3" fill="#535353"/><path d="M14 16h6v9h3v3H14v-3h2v-6h-2z" fill="#535353"/></svg></button>
      <button class="ib" aria-label="대지 패널"><svg class="ic" viewBox="0 0 36 36"><path d="M9 28H1V1h20v13M9 15h26v20H9z" fill="none" stroke="currentColor" stroke-width="2"/></svg></button></div>
    <div class="dsec"><div class="grip"></div>
      <button class="ib" aria-label="문자 패널"><svg class="ic" viewBox="0 0 36 36"><path d="M5 31L14.500 6h2L26 31M9 23h13" fill="none" stroke="currentColor" stroke-width="4"/><path d="M32 0v36" stroke="currentColor" stroke-width="2"/></svg></button>
      <button class="ib" aria-label="모양"><svg class="ic" viewBox="0 0 36 36"><circle cx="18" cy="18" r="12" fill="currentColor"/><circle cx="18" cy="18" r="16" fill="none" stroke="currentColor" stroke-width="2" stroke-dasharray="4 3"/></svg></button>
      <button class="ib" aria-label="그래픽 스타일"><svg class="ic" viewBox="0 0 36 36"><path d="M8 16V2h26v27H20" fill="none" stroke="currentColor" stroke-width="2"/><path d="M3 17h9v9H3z" fill="none" stroke="currentColor" stroke-width="2"/><path d="M14 20h5v14H6v-6h4v2h4z" fill="currentColor"/></svg></button></div>
    <div class="dsec"><div class="grip"></div>
      <button class="ib" aria-label="그레이디언트 패널"><svg class="ic" viewBox="0 0 36 36"><path d="M3 7h31v22H3z" fill="url(#gbw)" stroke="currentColor" stroke-width="2"/></svg></button>
      <button class="ib" aria-label="투명도"><svg class="ic" viewBox="0 0 36 36"><circle cx="13" cy="13" r="12" fill="currentColor"/><circle cx="22" cy="23" r="12" fill="#808080" stroke="currentColor" stroke-width="2"/></svg></button></div>
    <div class="dsec"><div class="grip"></div>
      <button class="ib" aria-label="변형"><svg class="ic"><use href="#bbox"/></svg></button>
      <button class="ib" aria-label="획"><svg class="ic" viewBox="0 0 36 36"><path d="M2 5h32v2H2zM2 13h32v4H2zM2 23h32v6H2z" fill="currentColor"/></svg></button>
      <button class="ib on" aria-label="정렬"><svg class="ic"><use href="#a-l"/></svg></button>
      <button class="ib" aria-label="패스파인더"><svg class="ic" viewBox="0 0 36 36"><path d="M3 3h17v8h-7v9H3zM22 13h11v20H13V22h9z" fill="currentColor"/><path d="M14 12h7v8h-7z" fill="currentColor"/></svg></button></div>
    <div class="dsec"><div class="grip"></div>
      <button class="ib" aria-label="내보내기"><svg class="ic" viewBox="0 0 36 36"><path d="M16 5H3v28h28V19" fill="none" stroke="currentColor" stroke-width="4"/><path d="M20 0h16v16h-4V7L24 16l-3-3 8-9h-9z" fill="currentColor"/></svg></button></div>
    <div class="dsec"><div class="grip"></div>
      <button class="ib" aria-label="브러시 패널"><svg class="ic" viewBox="0 0 36 40"><path d="M10 27h16v13H10zM2 7q7 4 6 9l6 10-2 1-6-9Q0 13 2 7zM14 0h6v10l1 17h-3L15 10zM24 10q9-2 11 6l-7 1-5 10-2-1z" fill="currentColor"/></svg></button>
      <button class="ib" aria-label="심볼"><svg class="ic" viewBox="0 0 36 36"><circle cx="18" cy="9" r="8" fill="currentColor"/><circle cx="9" cy="20" r="8" fill="currentColor"/><circle cx="27" cy="20" r="8" fill="currentColor"/><path d="M16 14h4q0 17 8 20v2H8v-2q8-3 8-20z" fill="currentColor"/></svg></button></div>
    <div class="dsec"><div class="grip"></div>
      <button class="ib" aria-label="단락"><svg class="ic" viewBox="0 0 36 36"><path d="M17 18q-11 0-11-8t11-8h11v30h-3V5h-3v27h-5z" fill="currentColor"/></svg></button>
      <button class="ib" aria-label="오픈타입"><svg class="ic" viewBox="0 0 36 36"><path d="M20 3Q7 4 5 18q-1 15 11 15-5-5-2-17 2-11 6-13z" fill="currentColor"/><path d="M20 3q12 1 10 14-3 15-14 16 6-3 8-15 1-10-4-15z" fill="#8a8a8a"/><path d="M20 3Q7 4 5 18q-1 15 11 15 11-1 14-16Q32 4 20 3z" fill="none" stroke="currentColor"/></svg></button></div>
  </aside>
  <div class="gap5"></div>

  <aside class="side d-flex flex-column">
    <div class="colhead d-flex align-items-center justify-content-end pe-2"><svg width="14" height="12" class="me-1" color="#c2c2c2"><use href="#dchr"/></svg></div>
    <section class="pane flex-shrink-0" style="height:722px">
      <div class="tabsrow d-flex">
        <div class="ptab on d-flex align-items-center" style="width:98px;padding-left:10px;gap:12px"><svg width="10" height="18" class="mt-2" color="#a8a8a8"><use href="#updn"/></svg>색상</div>
        <svg width="20" height="14" class="ms-auto align-self-center g12 me-2" color="#b4b4b4"><use href="#ham"/></svg><span class="me-1"></span>
      </div>
      <div class="d-flex" style="padding:12px 10px 0">
        <div style="width:86px">
          <div class="d-flex justify-content-between" style="width:64px;height:36px"><svg width="24" height="24"><use href="#dflt"/></svg><svg width="24" height="24" color="#c2c2c2"><use href="#swap"/></svg></div>
          <div class="duo sm"><i class="fg"></i><i class="bk"></i></div>
        </div>
        <div class="flex-grow-1">
          <div class="chan gc d-flex align-items-center"><label for="c">C</label><input id="c" type="range" value="0"><input class="fld pc" value="0" aria-label="C 값"><span class="ms-1">%</span></div>
          <div class="chan gm d-flex align-items-center"><label for="m">M</label><input id="m" type="range" value="0"><input class="fld pc" value="0" aria-label="M 값"><span class="ms-1">%</span></div>
          <div class="chan gy d-flex align-items-center"><label for="y">Y</label><input id="y" type="range" value="0"><input class="fld pc" value="0" aria-label="Y 값"><span class="ms-1">%</span></div>
          <div class="chan gk d-flex align-items-center"><label for="k">K</label><input id="k" type="range" value="0"><input class="fld pc" value="0" aria-label="K 값"><span class="ms-1">%</span></div>
        </div>
      </div>
      <div class="d-flex align-items-center" style="padding:10px 31px 0 10px">
        <div class="tri d-flex"><i class="nonew"></i><i style="background:#080402"></i><i style="background:#fff"></i></div>
        <label class="dotted ms-auto g12" for="hex">#</label><input id="hex" class="fld hex g12" value="ffffff">
      </div>
      <div class="spec"></div>
    </section>
    <div style="height:6px"></div>
    <section class="pane flex-grow-1 d-flex flex-column" style="min-height:0">
      <div class="tabsrow d-flex">
        <div class="ptab on ib" style="width:86px">견본</div>
        <div class="ptab ib" style="width:155px">라이브러리</div>
        <svg width="20" height="14" class="ms-auto align-self-center me-2" color="#b4b4b4"><use href="#ham"/></svg><span class="me-1"></span>
      </div>
      <div class="d-flex" style="padding:10px 10px 0">
        <div class="duo sm"><i class="fg"></i><i class="bk"></i></div>
        <button class="sqb ib ms-auto mt-2" aria-label="찾기"><svg width="36" height="36"><path d="M3 3h8v8H3zM13 14h9v8h-9zM3 24h8v8H3zM23 24h8v8h-8z" fill="#c2c2c2"/><circle cx="28" cy="7" r="7" fill="#2d8ceb"/></svg></button>
        <div class="seg s52 d-flex g10 mt-2">
          <button class="ib" aria-label="목록"><svg width="24" height="28"><path d="M0 2h24M0 10h24M0 18h24M0 26h24" stroke="#c2c2c2" stroke-width="3"/></svg></button>
          <button class="ib on" aria-label="축소판"><svg width="28" height="28"><path d="M0 0h8v8H0zM10 0h8v8h-8zM20 0h8v8h-8zM0 10h8v8H0zM10 10h8v8h-8zM20 10h8v8h-8zM0 20h8v8H0zM10 20h8v8h-8zM20 20h8v8h-8z" fill="#fff"/></svg></button>
        </div>
      </div>
      <div class="swlist flex-grow-1" id="sw"></div>
      <div class="botic d-flex align-items-center flex-shrink-0">
        <svg width="32" height="28"><path d="M1 3h5v22H1zM8 3h4v22H8zM14 5l4-2 8 20-4 2z" fill="currentColor"/><path d="M27 22h5l-2 4z" fill="currentColor"/></svg>
        <svg width="28" height="28" class="g20"><path d="M6 13V2h19v22H15M6 5h19" fill="none" stroke="currentColor" stroke-width="3"/><path d="M1 18h8v-5l8 7-8 7v-5H1z" fill="currentColor"/></svg>
        <svg width="32" height="28" class="ms-auto"><path d="M1 3h22v20H1zM1 10h22M1 16h22M8 3v20M15 3v20" fill="none" stroke="currentColor" stroke-width="2.500"/><path d="M26 22h5l-2 4z" fill="currentColor"/></svg>
        <svg width="28" height="28" class="g20"><path d="M3 4h22v20H3zM7 13h2M12 13h9M7 18h2M12 18h9" fill="none" stroke="currentColor" stroke-width="2"/><path d="M3 4h22v5H3z" fill="currentColor"/></svg>
        <svg width="28" height="28" class="ms-4"><use href="#s-fold"/></svg>
        <svg width="28" height="28" class="ms-4"><use href="#s-plus"/></svg>
        <svg width="28" height="28" class="ms-4"><use href="#s-trash"/></svg>
        <span style="width:40px"></span>
      </div>
    </section>
    <div style="height:2px"></div>
  </aside>

  <section class="alpan">
    <div class="tabsrow d-flex">
      <div class="ptab ib" style="width:70px;padding-left:16px">변형</div>
      <div class="ptab ib" style="width:64px">획</div>
      <div class="ptab on d-flex align-items-center" style="width:93px;padding-left:8px;gap:12px"><svg width="10" height="18" class="mt-2" color="#b4b4b4"><use href="#updn"/></svg>정렬</div>
      <div class="ptab d-flex align-items-center overflow-hidden" style="width:125px;padding-left:18px">패스파인더</div>
      <div class="ms-auto d-flex align-items-center" style="gap:14px;padding-right:12px;color:#d0d0d0"><svg width="20" height="17"><use href="#dchr"/></svg><span style="width:2px;height:22px;background:#b4b4b4"></span><svg width="20" height="14"><use href="#ham"/></svg></div>
    </div>
    <div class="lab">오브젝트 정렬:</div>
    <div class="airow d-flex">
      <button class="ib" aria-label="왼쪽"><svg class="ic"><use href="#a-l"/></svg></button><button class="ib" aria-label="가로 가운데"><svg class="ic"><use href="#a-c"/></svg></button><button class="ib" aria-label="오른쪽"><svg class="ic"><use href="#a-r"/></svg></button>
      <button class="ib hot ms-auto" aria-label="위"><svg class="ic"><use href="#a-t"/></svg></button><button class="ib" aria-label="세로 가운데"><svg class="ic"><use href="#a-m"/></svg></button><button class="ib" aria-label="아래"><svg class="ic"><use href="#a-b"/></svg></button>
    </div>
    <div class="hr2"></div>
    <div class="lab">오브젝트 분포:</div>
    <div class="airow d-flex">
      <button class="ib" aria-label="위 분포"><svg class="ic"><use href="#d-t"/></svg></button><button class="ib" aria-label="세로 분포"><svg class="ic"><use href="#d-m"/></svg></button><button class="ib" aria-label="아래 분포"><svg class="ic"><use href="#d-b"/></svg></button>
      <button class="ib ms-auto" aria-label="왼쪽 분포"><svg class="ic"><use href="#d-l"/></svg></button><button class="ib" aria-label="가로 분포"><svg class="ic"><use href="#d-c"/></svg></button><button class="ib" aria-label="오른쪽 분포"><svg class="ic"><use href="#d-r"/></svg></button>
    </div>
    <div class="hr2"></div>
    <div class="d-flex" style="height:119px">
      <div style="width:274px">
        <div class="lab">분포 간격:</div>
        <div class="airow d-flex align-items-center">
          <button class="ib tight" aria-label="세로 간격"><svg class="ic"><use href="#sp-v"/></svg></button><button class="ib tight" aria-label="가로 간격"><svg class="ic"><use href="#sp-h"/></svg></button>
          <div class="spin d-flex align-items-center"><svg width="40" height="40" viewBox="0 0 40 40"><path d="M12 14l7-7 7 7M12 26l7 7 7-7" fill="none" stroke="#757575" stroke-width="2"/></svg><input value="0 mm" aria-label="간격" disabled></div>
        </div>
      </div>
      <span class="my-2 me-1" style="width:2px;background:#4c4c4c"></span>
      <div class="flex-grow-1">
        <div class="lab" style="margin-left:16px">정렬 대상:</div>
        <div class="airow d-flex dimm justify-content-end">
          <button class="ib tight" aria-label="대지에 정렬"><svg width="36" height="36" viewBox="0 0 36 36"><path d="M10 9h13l6 6v15H10zM5 9h3M11 2v4" fill="none" stroke="currentColor" stroke-width="2"/></svg></button>
          <button class="ib tight off" aria-label="선택에 정렬"><svg width="36" height="36" color="#858585"><use href="#bbox2"/></svg></button>
          <button class="ib" aria-label="주요 오브젝트"><svg width="36" height="36" viewBox="0 0 36 36"><use href="#bbox2"/><path d="M11 10l8 9" stroke="currentColor" stroke-width="4"/><circle cx="21" cy="22" r="5" fill="none" stroke="currentColor" stroke-width="3"/></svg></button>
        </div>
      </div>
    </div>
  </section>
</main>

<footer class="tb d-flex align-items-center flex-shrink-0">
  <div class="wth"><div class="position-relative" style="width:52px"><svg width="52" height="44" viewBox="0 0 52 44"><path d="M12 42Q2 41 2 31q1-10 11-11Q14 6 26 5q12 1 13 14 11 1 11 12-1 10-11 11z" fill="url(#gcld)"/></svg><span class="cnt">4</span></div></div>
  <nav class="d-flex align-items-center">
    <a href="#" class="app ib" aria-label="시작"><svg viewBox="0 0 48 48"><path d="M1 1h22v22H1zM25 1h22v22H25zM1 25h22v22H1zM25 25h22v22H25z" fill="url(#gwin)"/></svg></a>
    <a href="#" class="app ib" aria-label="검색"><svg viewBox="0 0 48 48"><path d="M33 33l11 12" stroke="#c8d0da" stroke-width="5"/><circle cx="22" cy="20" r="17" fill="#3c4a66" stroke="#e8e8e8" stroke-width="4"/></svg></a>
    <a href="#" class="app ib" aria-label="작업 보기"><svg viewBox="0 0 48 48"><path d="M2 14h34v30H2z" fill="#5e5e5e"/><path d="M13 2h34v30H13z" fill="#f2f2f2"/><path d="M13 14h23v18H13z" fill="#bcbcbc"/></svg></a>
    <a href="#" class="app ib run" aria-label="탐색기"><svg viewBox="0 0 48 48"><path d="M0 4h14l5 5v10H0z" fill="#e09a10"/><path d="M0 12q0-2 2-2h18l3-3h23q2 0 2 2v36H0z" fill="url(#gfold)"/><path d="M8 46V36q0-5 5-5h22q5 0 5 5v10z" fill="#0a78c8"/><path d="M15 39h18" stroke="#064a80" stroke-width="3"/></svg></a>
    <a href="#" class="app ib" aria-label="스토어"><svg viewBox="0 0 48 48"><path d="M12 12V4q0-3 3-3h18q3 0 3 3v8" fill="none" stroke="#1aa8ee" stroke-width="4"/><path d="M1 8h46v32q0 8-8 8H9q-8 0-8-8z" fill="#f2f2f2"/><path d="M13 18h10v10H13z" fill="#f25022"/><path d="M25 18h10v10H25z" fill="#7fba00"/><path d="M13 30h10v10H13z" fill="#00a4ef"/><path d="M25 30h10v10H25z" fill="#ffb900"/></svg></a>
    <a href="#" class="app ib run" aria-label="카카오톡"><svg viewBox="0 0 48 48"><rect width="48" height="48" rx="5" fill="#fae100"/><ellipse cx="24" cy="23" rx="18" ry="15" fill="#371d1e"/><path d="M14 33l-2 9 10-6z" fill="#371d1e"/><text x="24" y="27" text-anchor="middle" font-size="11" font-weight="800" font-family="Open Sans" fill="#fae100">TALK</text></svg></a>
    <a href="#" class="app ib" aria-label="설정 앱"><svg viewBox="0 0 48 48"><rect x="1" width="46" height="47" rx="5" fill="#8b7bff"/><path d="M9 38V12q0-3 3-3h24q3 0 3 3v23q0 3-3 3H16M17 17v14M24 17v14M31 17v14M15 20h4M22 27h4M29 22h4" fill="none" stroke="#fff" stroke-width="2"/></svg></a>
    <a href="#" class="app ib" aria-label="메모장"><svg viewBox="0 0 48 48"><path d="M6 40h36v8H6z" fill="#b5540c"/><path d="M6 36h36v8H6z" fill="#f4f4f4"/><path d="M6 3h36v37H6z" fill="url(#gnote)"/><path d="M12 14h24M12 22h24M12 30h24" stroke="#0c7394" stroke-width="3"/><path d="M12 0v6M20 0v6M28 0v6M36 0v6" stroke="#0c7394" stroke-width="4"/></svg></a>
    <a href="#" class="app ib" aria-label="엣지"><svg viewBox="0 0 48 48"><circle cx="24" cy="24" r="24" fill="#0c7fd6"/><path d="M0 22Q3 0 25 0q21 1 23 19 0 12-12 13-9 0-8-4 4-5 0-9-10-11-28 3z" fill="url(#gedge)"/><path d="M14 26q2 22 29 12Q35 50 22 48 8 38 14 26z" fill="#0f559e"/><path d="M48 22q-3 10-14 10-8 0-6-4 3-5-1-9-5-2-9 3 0 16 18 17 5 0 9-2z" fill="#12245a"/><path d="M48 19q-1 13-13 13-7 0-7-4 6-4 0-10z" fill="url(#gedge)"/></svg></a>
    <a href="#" class="app ib run" aria-label="크롬"><svg viewBox="0 0 48 48"><circle cx="24" cy="24" r="24" fill="#fbbf12"/><path d="M3 12A24 24 0 0 1 45 12H24L14 30z" fill="#e33b2e"/><path d="M3 12A24 24 0 0 0 24 48L34 30 14 30z" fill="#259c42"/><circle cx="24" cy="24" r="12" fill="#fff"/><circle cx="24" cy="24" r="10" fill="#2b7de9"/></svg></a>
    <a href="#" class="app ib run" aria-label="노션"><svg viewBox="0 0 48 48"><path d="M5 8l4-3 26-1 8 6v30l-2 3-26 2-10-9z" fill="#000" stroke="#fff" stroke-width="2"/><path d="M8 7l26-1 5 4-25 1z" fill="#fff"/><path d="M15 15l26-2v26l-26 2z" fill="#fff"/><text x="28" y="36" text-anchor="middle" font-size="25" font-weight="700" font-family="Liberation Serif">N</text></svg></a>
    <a href="#" class="app ib" aria-label="크리에이티브 클라우드"><svg viewBox="0 0 48 48"><rect x="3" y="2" width="42" height="41" rx="8" fill="url(#gcc)"/><rect x="3" y="2" width="42" height="41" rx="8" fill="url(#gcc2)"/><g fill="none" stroke="#fff"><path d="M18 33q-10 0-10-10t10-10h3q3-2 8-2 11 1 11 11t-11 11z" stroke-width="2.500"/><path d="M28 28q-4 0-7-4l-2-2q-5-2-6 2 0 4 5 4h4M20 20q4-5 8-4 6 1 6 6t-6 6" stroke-width="3"/></g></svg></a>
    <a href="#" class="app ib run act" aria-label="일러스트레이터"><svg viewBox="-2 0 36 34"><use href="#ailogo" width="32" height="32"/></svg></a>
    <a href="#" class="app ib" aria-label="휴대폰"><svg viewBox="0 0 48 48"><path d="M4 3h40v31H4z" fill="#1583cf"/><path d="M1 33h46v3H1z" fill="#0d5ea3"/><path d="M10 8h21v36H10z" fill="#19a0ea"/><path d="M10 8h21v16H10z" fill="#35c5f8"/><path d="M10 8h21v5H10z" fill="#52e0ff"/><path d="M10 33h21v7H10z" fill="#0a68b8"/><path d="M10 40h21v4H10z" fill="#1b4c80"/></svg></a>
    <a href="#" class="app ib" aria-label="W"><svg viewBox="0 0 48 48"><rect x="1" y="1" width="44" height="45" rx="3" fill="#7b5cff"/><path d="M23 1h7v45h-7z" fill="#2c0a6e"/><path d="M30 1h7v45h-7z" fill="#5a16d0"/><text x="12" y="21" text-anchor="middle" font-size="18" fill="#fff" font-family="Open Sans">W</text></svg></a>
    <a href="#" class="app ib" aria-label="원격 데스크톱"><svg viewBox="0 0 48 48"><path d="M11 6h33v26H11z" fill="#e4e4e4" stroke="#6e6e6e" stroke-width="3"/><rect x="4" y="15" width="35" height="27" rx="2" fill="#f4f4f4" stroke="#9c9c9c" stroke-width="3"/><path d="M9 40a13 13 0 0 1 3-9l8 9z" fill="#259c42"/><path d="M11 32a13 13 0 0 1 20-1l-9 5z" fill="#dd4b3e"/><path d="M31 31a13 13 0 0 1 4 9H24z" fill="#fbbf12"/><path d="M16 40a6 6 0 0 1 12 0z" fill="#3f80e8" stroke="#fff" stroke-width="1.500"/></svg></a>
    <a href="#" class="app ib" aria-label="교보문고 전자도서관"><svg viewBox="0 0 48 48"><path d="M1 6q0-6 6-6h34q6 0 6 6v27H1z" fill="#45b035"/><path d="M1 32h23v16H7q-6 0-6-6z" fill="#d4d4d4"/><path d="M24 32h23v10q0 6-6 6H24z" fill="#fff"/><path d="M38 32h4v7l-2-2-2 2z" fill="#45b035"/><path d="M21 7l3 2 3-2q0 5-3 5t-3-5z" fill="#fff"/><text x="24" y="17" text-anchor="middle" font-size="4" fill="#fff" font-weight="700">KYOBO 교보문고</text><text x="24" y="26" text-anchor="middle" font-size="6" fill="#fff" font-weight="700">전자도서관</text></svg></a>
    <a href="#" class="app ib" aria-label="스티커 메모"><svg viewBox="0 0 48 48"><path d="M4 3h40v42H4z" fill="#fdd609"/><path d="M24 45l20-21v21z" fill="#e8a30c"/><path d="M24 45V24h20z" fill="#484848"/></svg></a>
    <a href="#" class="app ib" aria-label="마우스 앱"><svg viewBox="0 0 48 48"><rect x="1" width="46" height="48" rx="12" fill="url(#gpur)"/><path d="M24 10H12q-4 0-4 4v20q0 4 4 4h12M24 17q0-7 8-7t8 7v13q0 8-8 8t-8-8z" fill="none" stroke="#fff" stroke-width="2.500"/><path d="M32 17v5M13 18h3M18 18h3M13 22h5M13 27h8M13 32h3M18 32h3" stroke="#fff" stroke-width="2.500"/></svg></a>
  </nav>
  <div class="ms-auto d-flex align-items-center" style="padding-right:40px">
    <svg width="22" height="16"><path d="M1 14L11 3l10 11" fill="none" stroke="#fff" stroke-width="3"/></svg>
    <svg width="34" height="36" viewBox="0 0 34 36" style="margin-left:36px"><path d="M2 18Q3 4 16 2q9 0 14 8M30 1v9h-9M4 35v-9h9M5 27q5 6 12 7" fill="none" stroke="#fff" stroke-width="2.500"/><circle cx="25" cy="27" r="8" fill="#ff9b0a"/></svg>
    <svg width="26" height="34" viewBox="0 0 26 34" style="margin-left:34px"><path d="M2 33L13 2l11 31M6 22h14" fill="none" stroke="#fff" stroke-width="2.500"/></svg>
    <svg width="34" height="28" viewBox="0 0 34 28" style="margin-left:34px"><path d="M2 10Q17-5 32 10M7 15Q17 5 27 15M12 20q5-5 10 0" fill="none" stroke="#fff" stroke-width="2.500"/><circle cx="17" cy="24" r="3" fill="#fff"/></svg>
    <svg width="32" height="26" viewBox="0 0 32 26" class="ms-3"><path d="M1 8h6l7-6v22l-7-6H1zM20 7l11 12M31 7L20 19" fill="none" stroke="#fff" stroke-width="2"/></svg>
    <svg width="34" height="34" viewBox="0 0 34 34" class="ms-3"><path d="M9 7h17q4 0 4 4v5M17 27H7q-5 0-5-5v-8" fill="none" stroke="#fff" stroke-width="2.500"/><path d="M11 11h13q2 0 1 2l-3 7q-1 3-3 3H8q-3 0-2-3l1-4zM7 0v6h5L4 17v-6H1zM26 35l-7-8q-1-6 4-5l3 2q6-5 8 1 0 3-8 10zM30 13h4v6h-4z" fill="#fff"/></svg>
    <div class="clock" style="margin-left:31px">오전 9:39<br>2025-01-16</div>
    <svg width="30" height="36" viewBox="0 0 30 36" style="margin-left:16px"><path d="M2 27q3-3 3-13Q6 4 14 4q9 1 9 10 0 9 4 13v2H2zM9 31h9q-1 4-4 4t-5-4z" fill="#fff"/><path d="M10 13h7l-7 9h7" fill="none" stroke="#1b222d" stroke-width="2.500"/><path d="M19 4h9l-8 9h9" fill="none" stroke="#1b222d" stroke-width="6"/><path d="M20 4h7l-7 8h8" fill="none" stroke="#fff" stroke-width="2.500"/></svg>
  </div>
</footer>
<script src="https://cdn.jsdelivr.net/npm/bootstrap@5.3.0/dist/js/bootstrap.bundle.min.js"></script>
<script>
const NONE='<svg width="26" height="26"><path d="M0 0h26v26H0z" fill="#fff"/><path d="M2 24L24 2" stroke="#f00" stroke-width="4"/></svg>';
const REG='<svg width="26" height="26"><path d="M0 0h26v26H0z" fill="#eee"/><g fill="none" stroke="#555" stroke-width="1.500"><circle cx="13" cy="13" r="10"/><circle cx="13" cy="13" r="5"/><path d="M13 0v26M0 13h26"/></g><circle cx="13" cy="13" r="2" fill="#333"/></svg>';
const WHITE='<svg width="26" height="26"><path d="M0 0h26v26H0z" fill="#fff"/><path d="M3 3h20v20H3z" fill="#fff" stroke="#000" stroke-width="2"/></svg>';
const DOT='<svg width="26" height="26"><path d="M0 0h26v26H0z" fill="#fff"/><circle cx="13" cy="13" r="11" fill="#dcdcdc" stroke="#dcc078" stroke-width="1.500"/><path d="M8 5h3v3H8zM14 5h3v3h-3zM5 8h3v3H5zM11 8h3v3h-3zM17 8h3v3h-3zM8 11h3v3H8zM14 11h3v3h-3zM5 14h3v3H5zM11 14h3v3h-3zM17 14h3v3h-3zM8 17h3v3H8zM14 17h3v3h-3z" fill="#fff"/></svg>';
const SWIRL='<svg width="26" height="26"><path d="M0 0h26v26H0z" fill="#2c5e9c"/><path d="M1 3q9-3 8 5t-7 3M12 2q8 1 3 8M25 2q-10 4-6 10t7 2M2 16q8-2 8 5t-7 4M13 13q6 4 1 12M18 24q-3-8 7-6" fill="none" stroke="#d8e6f4" stroke-width="1.500"/></svg>';
const LEAF='<svg width="26" height="26"><path d="M0 0h26v26H0z" fill="#f0ecd4"/><path d="M1 4q6-6 9 0-3 6-9 0zM12 12q7-5 8 2-4 5-8-2z" fill="#a8cf5c"/><path d="M14 2q8-3 10 4-6 5-10-4zM2 15q7-5 8 3-4 6-8-3zM18 19q6-2 7 5h-7z" fill="#8dbdd8"/><path d="M5 10q5-3 7 0-3 4-7 0zM20 10h5v5h-4zM10 20h5v5h-5z" fill="#e0c480"/></svg>';
const FOLD='<svg width="26" height="26"><use href="#s-fold"/></svg>';
const rows=[
 [NONE,REG,WHITE,'#080402','#e8131a','#eeeb38','#6cb92e','#6fc6d8','#1c489c','#aa5199','#b6272e','#dd2026','#e65a28','#ef8f26','#f1ab42'],
 ['#f0e634','#cfd530','#8abf42','#38ac4a','#1c8d46','#126432','#27aa6e','#1ca295','#2c9fd6','#0e6ab0','#292c84','#1d2a54','#5f2c86','#8a2486','#921c58'],
 ['#c21a58','#da2074','#c4ac94','#98826e','#726256','#52463e','#c2986c','#a27a50','#886038','#704a22','#5e381c','#40200e','linear-gradient(90deg,#fff,#000)','linear-gradient(90deg,#d0dff0,#2090cc 60%,#0a5aa8)','linear-gradient(90deg,#ee74a4,rgba(255,255,255,.2)),repeating-conic-gradient(#bbb 0 25%,#fff 0 50%) 0 0/8px 8px'],
 ['radial-gradient(#fde8d0,#f18c2c 60%)',DOT,SWIRL,LEAF],
 [FOLD,'#080402','#1a1c1c','#303232','#4b4b4b','#646666','#7e7e7e','#989898','#b2b2b2','#cacaca','#e4e4e4','#f2f2f0'],
 [FOLD,'#459cd8','#7abe4a','#f28c28','#e6222c','#ee74a4','#b8c8d0']];
const box=document.getElementById('sw');
rows.forEach((r,i)=>{const d=document.createElement('div');d.className='swrow d-flex'+(i>3?' grp':'');
 r.forEach(c=>{const b=document.createElement('button');b.setAttribute('aria-label','견본');
  if(c[0]==='<'){b.innerHTML=c;b.style.color='inherit'}else b.style.background=c;d.append(b)});box.append(d)});
</script>
</body>
</html>
